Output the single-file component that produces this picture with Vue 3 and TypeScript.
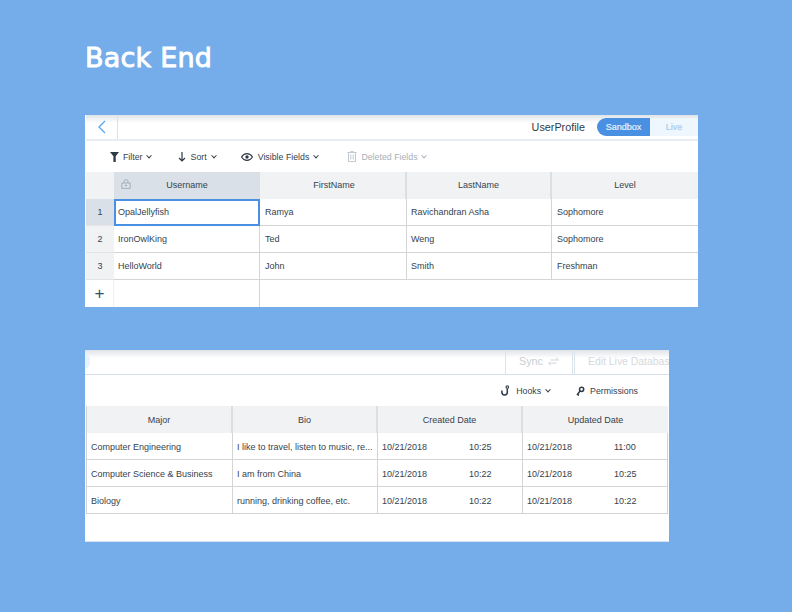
<script setup lang="ts">
interface Row { username: string; first: string; last: string; level: string }
const rows1: Row[] = [
  { username: 'OpalJellyfish', first: 'Ramya', last: 'Ravichandran Asha', level: 'Sophomore' },
  { username: 'IronOwlKing', first: 'Ted', last: 'Weng', level: 'Sophomore' },
  { username: 'HelloWorld', first: 'John', last: 'Smith', level: 'Freshman' },
]
const rows2 = [
  { major: 'Computer Engineering', bio: 'I like to travel, listen to music, re...', ct: '10:25', ut: '11:00' },
  { major: 'Computer Science & Business', bio: 'I am from China', ct: '10:22', ut: '10:25' },
  { major: 'Biology', bio: 'running, drinking coffee, etc.', ct: '10:22', ut: '10:22' },
]
</script>

<template>
  <main class="page">
    <h1 class="title">Back End</h1>

    <section class="panel panel-one">
      <header class="topbar">
        <div class="back">
          <svg width="10" height="14" viewBox="0 0 10 14"><path d="M8 1 2 7l6 6" fill="none" stroke="#5aa6ec" stroke-width="1.3" /></svg>
        </div>
        <span class="table-name">UserProfile</span>
        <div class="switch">
          <span class="on">Sandbox</span>
          <span class="off">Live</span>
        </div>
      </header>
      <div class="toolbar left">
        <span class="tool t-filter">
          <svg width="10" height="10" viewBox="0 0 10 10"><path d="M0 0h9L5.7 4.200V10H3.400V4.200z" fill="#2e3a45" /></svg>
          Filter <i class="caret"></i>
        </span>
        <span class="tool t-sort">
          <svg width="8" height="10" viewBox="0 0 8 10"><path d="M4 0v9M1 6l3 3 3-3" fill="none" stroke="#2e3a45" stroke-width="1.200" /></svg>
          Sort <i class="caret tight-caret"></i>
        </span>
        <span class="tool t-visible">
          <svg width="12" height="8" viewBox="0 0 12 8"><path d="M.5 4C2 1.600 4 .6 6 .6s4 1 5.500 3.400C10 6.400 8 7.400 6 7.400S2 6.400.5 4z" fill="none" stroke="#2e3a45" stroke-width="1.100" /><circle cx="6" cy="4" r="1.700" fill="#2e3a45" /></svg>
          Visible Fields <i class="caret tight-caret"></i>
        </span>
        <span class="tool t-deleted">
          <svg width="10" height="11" viewBox="0 0 10 11"><path d="M3.500.5h3M.5 1.500h9M1.500 1.500v9h7v-9M3.800 3.500v5M6.200 3.500v5" fill="none" stroke="#bcc3ca" stroke-width=".9" /></svg>
          Deleted Fields <i class="caret light tight-caret"></i>
        </span>
      </div>
      <div class="grid grid-one">
        <div class="hd corner"></div>
        <div class="hd sel">
          <svg class="lock" width="10" height="10" viewBox="0 0 10 10"><path d="M3 4V2.600a2 2 0 0 1 4 0V4M.8 4h8.400v5.400H.8zM5 5.500v2M4 6.500h2" fill="none" stroke="#9aa5b0" stroke-width=".8" /></svg>
          Username
        </div>
        <div class="hd nudge">FirstName</div>
        <div class="hd">LastName</div>
        <div class="hd last">Level</div>
        <template v-for="(r, i) in rows1" :key="r.username">
          <div class="num" :class="{ cur: i === 0 }">{{ i + 1 }}</div>
          <div class="cell tight" :class="{ focus: i === 0 }">{{ r.username }}</div>
          <div class="cell">{{ r.first }}</div>
          <div class="cell tight">{{ r.last }}</div>
          <div class="cell last">{{ r.level }}</div>
        </template>
        <div class="add">+</div>
        <div class="add-cell"></div>
        <div class="add-rest"></div>
      </div>
    </section>

    <section class="panel panel-two">
      <header class="topbar two">
        <span class="blob"></span>
        <div class="sync">
          Sync
          <svg width="11" height="9" viewBox="0 0 11 9"><path d="M2.500 3H10.500L8 .8M8.500 6H.5L3 8.200" fill="none" stroke="#c8ced4" stroke-width=".9" /></svg>
        </div>
        <div class="edit-live">Edit Live Databas</div>
      </header>
      <div class="toolbar right">
        <span class="tool t-hooks">
          <svg width="9" height="11" viewBox="0 0 9 11"><path d="M6.300 3.800v3.400a2.700 2.700 0 0 1-5.400 0V5.600" fill="none" stroke="#2e3a45" stroke-width="1.500" /><circle cx="6.300" cy="2" r="1.300" fill="none" stroke="#2e3a45" stroke-width="1.100" /></svg>
          Hooks <i class="caret hook-caret"></i>
        </span>
        <span class="tool t-perm">
          <svg width="9" height="10" viewBox="0 0 9 10"><circle cx="5.600" cy="3.300" r="2.100" fill="none" stroke="#2e3a45" stroke-width="1.500" /><path d="M4 5 1 9M1.500 8.300l1.500 1" fill="none" stroke="#2e3a45" stroke-width="1.400" /></svg>
          Permissions
        </span>
      </div>
      <div class="grid grid-two">
        <div class="hd">Major</div>
        <div class="hd">Bio</div>
        <div class="hd">Created Date</div>
        <div class="hd last">Updated Date</div>
        <template v-for="r in rows2" :key="r.major">
          <div class="cell">{{ r.major }}</div>
          <div class="cell">{{ r.bio }}</div>
          <div class="cell date"><span>10/21/2018</span><span>{{ r.ct }}</span></div>
          <div class="cell date last"><span>10/21/2018</span><span>{{ r.ut }}</span></div>
        </template>
      </div>
    </section>
  </main>
</template>

<style>
html, body { margin: 0; background: #74adea; }
</style>

<style scoped>
.page {
  width: 792px;
  height: 612px;
  box-sizing: border-box;
  padding: 41px 0 0 85px;
  background: #74adea;
  font-family: "Liberation Sans", Arial, sans-serif;
  color: #36424d;
  overflow: hidden;
}
.title {
  margin: 0 0 41px;
  height: 33px;
  line-height: 33px;
  font-family: "DejaVu Sans", sans-serif;
  font-size: 27px;
  font-weight: 400;
  letter-spacing: .2px;
  color: #fff;
  -webkit-text-stroke: .9px #fff;
}
.panel {
  background: #fff;
  height: 192px;
  overflow: hidden;
  position: relative;
}
.panel-one { width: 613px; margin-bottom: 43px; padding-left: 1px; box-sizing: border-box; }
.panel-two { width: 584px; padding-left: 2px; box-sizing: border-box; box-shadow: inset 0 -1px 0 #d5e4f5; }
.topbar {
  height: 24px;
  display: flex;
  align-items: center;
  border-bottom: 2px solid #e8edf2;
  background: linear-gradient(#dfe3e8, #fff 8px);
}
.topbar.two {
  margin-left: -2px;
  border-bottom: 1px solid #d5e0ea;
  justify-content: flex-end;
  position: relative;
}
.back {
  width: 32px;
  height: 24px;
  display: flex;
  align-items: center;
  justify-content: center;
  border-right: 1px solid #d9e2ea;
  box-sizing: border-box;
}
.table-name {
  margin-left: auto;
  margin-right: 12px;
  font-size: 10.800px;
  color: #2f3b46;
  padding-bottom: 1px;
}
.switch { display: flex; height: 18px; font-size: 9px; line-height: 18px; margin-bottom: 1px; }
.switch span { display: block; text-align: center; -webkit-text-stroke: .2px currentColor; }
.switch .on { width: 53px; color: #e4f0fc; background: #4a90e2; border-radius: 9px 0 0 9px; }
.switch .off { width: 48px; color: #a9cdf0; background: #eef6fe; }
.toolbar {
  height: 31px;
  display: flex;
  align-items: center;
  font-size: 8.800px;
}
.tool { display: flex; align-items: center; gap: 3px; white-space: nowrap; position: relative; }
.t-filter { margin-left: 24px; }
.t-sort { margin-left: 27px; gap: 5px; }
.t-visible { margin-left: 25px; gap: 5px; }
.t-deleted { margin-left: 29px; gap: 4px; color: #a8b0b8; }
.toolbar.right { justify-content: flex-end; padding-right: 31px; }
.t-perm { margin-left: 26px; gap: 5px; }
.t-hooks { gap: 6px; }
.caret {
  width: 3px;
  height: 3px;
  border-right: 1px solid #2f3b46;
  border-bottom: 1px solid #2f3b46;
  transform: rotate(45deg) translate(-1px, -1px);
  margin-left: 1px;
}
.caret.tight-caret { margin-left: 0; }
.caret.hook-caret { margin-left: -1px; }
.caret.light { border-color: #a8b0b8; }
.grid { display: grid; font-size: 9px; }
.grid-one { grid-template-columns: 28px 146px 147px 145px 146px; grid-template-rows: 27px 27px 27px 27px 28px; }
.grid-two {
  grid-template-columns: 146px 145px 145px 145px;
  grid-template-rows: 27px 27px 27px 27px;
  margin-left: -1px;
  border-left: 1px solid #d4d4d4;
  width: fit-content;
}
.hd {
  display: flex;
  align-items: center;
  justify-content: center;
  background: #f1f2f4;
  border-right: 2px solid #dcdfe2;
  box-sizing: border-box;
  position: relative;
  padding-bottom: 2px;
}
.grid-two .hd { padding-bottom: 0; }
.hd.nudge { padding-left: 3px; }
.hd.last { border-right: 0; }
.hd.corner { background: #f1f2f4; border-right: 0; }
.hd.sel { background: #d9e0e7; padding-left: 2px; }
.lock { position: absolute; left: 7px; top: 7px; }
.num {
  display: flex;
  align-items: center;
  justify-content: center;
  background: #f1f2f4;
  border-bottom: 1px solid #e4e4e4;
  box-sizing: border-box;
}
.num.cur { background: #d9e0e7; }
.cell {
  display: flex;
  align-items: center;
  padding-left: 5px;
  padding-bottom: 1px;
  box-sizing: border-box;
  background: #fff;
  border-right: 1px solid #d4d4d4;
  border-bottom: 1px solid #d4d4d4;
  white-space: nowrap;
  overflow: hidden;
}
.grid-two .cell { padding-left: 4px; padding-bottom: 0; padding-top: 1px; }
.cell.tight { padding-left: 4px; }
.cell.last { border-right: 0; }
.grid-two .cell.last { border-right: 1px solid #d4d4d4; }
.cell.focus { border: 2px solid #4a90e2; padding-left: 2px; }
.date span:first-child { width: 87px; }
.add {
  display: flex;
  align-items: center;
  justify-content: center;
  font-size: 17px;
  color: #2d4f6a;
  border-right: 1px solid #e6f1fc;
}
.add-cell { border-right: 1px solid #d4d4d4; }
.add-rest { grid-column: span 3; }
.blob {
  position: absolute;
  left: -6px;
  top: 3px;
  width: 11px;
  height: 16px;
  border-radius: 50%;
  background: #e6f3fe;
}
.sync {
  width: 68px;
  height: 24px;
  display: flex;
  align-items: center;
  gap: 5px;
  box-sizing: border-box;
  padding: 0 0 2px 13px;
  border-left: 1px solid #dde5ec;
  border-right: 1px solid #dde5ec;
  font-size: 10.800px;
  color: #c8ced4;
}
.edit-live {
  width: 95px;
  height: 24px;
  margin-left: 1px;
  display: flex;
  align-items: center;
  box-sizing: border-box;
  padding: 0 0 2px 13px;
  border-left: 1px solid #dde5ec;
  font-size: 10.400px;
  color: #d4d9de;
  white-space: nowrap;
}
</style>
